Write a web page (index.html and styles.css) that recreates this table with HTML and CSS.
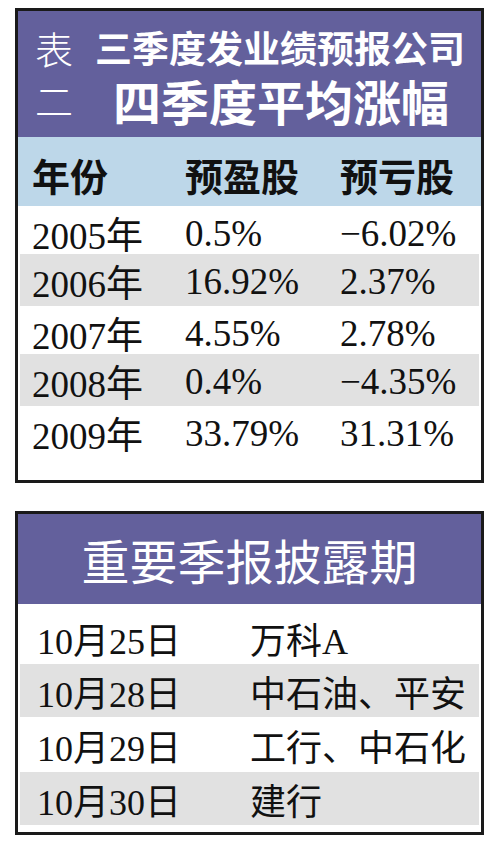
FILE: index.html
```html
<!DOCTYPE html>
<html lang="zh-CN">
<head>
  <meta charset="UTF-8" />
  <meta name="viewport" content="width=device-width, initial-scale=1" />
  <title>三季度发业绩预报公司四季度平均涨幅</title>
  <link rel="stylesheet" href="styles.css">
</head>
<body>
  <div class="panel stats">
    <div class="title">
      <div class="title-no">
        <span>表</span>
        <span>二</span>
      </div>
      <div class="title-main">
        <div class="t1">三季度发业绩预报公司</div>
        <div class="t2">四季度平均涨幅</div>
      </div>
    </div>
    <div class="rows">
      <div class="row head"><span>年份</span><span>预盈股</span><span>预亏股</span></div>
      <div class="row"><span>2005年</span><span>0.5%</span><span>−6.02%</span></div>
      <div class="row shade"><span>2006年</span><span>16.92%</span><span>2.37%</span></div>
      <div class="row"><span>2007年</span><span>4.55%</span><span>2.78%</span></div>
      <div class="row shade"><span>2008年</span><span>0.4%</span><span>−4.35%</span></div>
      <div class="row"><span>2009年</span><span>33.79%</span><span>31.31%</span></div>
    </div>
  </div>

  <div class="panel dates">
    <div class="title center">重要季报披露期</div>
    <div class="rows">
      <div class="row first"><span>10月25日</span><span>万科A</span></div>
      <div class="row shade"><span>10月28日</span><span>中石油、平安</span></div>
      <div class="row"><span>10月29日</span><span>工行、中石化</span></div>
      <div class="row shade"><span>10月30日</span><span>建行</span></div>
    </div>
  </div>
</body>
</html>
```

FILE: styles.css
```css
body {
  margin: 0;
  background-color: #fff;
  color: #111;
  font-family: "Liberation Serif", "Noto Sans CJK SC", serif;
  padding: 8px 16px 0 15px;
}
.panel {
  border: 3px solid #1a1a1a;
  background-color: #fff;
}
.title {
  background-color: #63609c;
  color: #fff;
  font-family: "Noto Sans CJK SC", sans-serif;
}
.stats .title {
  display: flex;
  height: 126px;
  padding: 0 0 0 17px;
}
.title-no {
  display: flex;
  flex-direction: column;
  font-size: 38px;
  font-weight: 300;
  padding-top: 11px;
  width: 60px;
}
.title-no span {
  line-height: 52px;
}
.title-main {
  padding-top: 11px;
}
.t1 {
  font-size: 37px;
  font-weight: 700;
  line-height: 50px;
}
.t2 {
  font-size: 48px;
  font-weight: 700;
  line-height: 56px;
  margin-left: 18px;
}
.rows {
  padding: 0 2px;
}
.row {
  display: grid;
  align-items: center;
  box-sizing: border-box;
}
.row.shade {
  background-color: #e1e1e1;
}
.stats .row {
  grid-template-columns: 153px 155px 1fr;
  padding: 0 0 6px 12px;
  height: 48px;
  font-size: 37px;
}
.stats .row.shade {
  height: 52px;
}
.stats .row.head {
  background-color: #bdd7e9;
  height: 69px;
  margin: 0 -2px;
  padding: 6px 0 0 14px;
  font-family: "Noto Sans CJK SC", sans-serif;
  font-weight: 700;
  font-size: 38px;
}
.stats .rows {
  padding-bottom: 26px;
}
.dates {
  margin-top: 28px;
}
.title.center {
  height: 90px;
  line-height: 90px;
  text-align: center;
  font-size: 48px;
}
.dates .rows {
  padding-top: 8px;
  padding-bottom: 7px;
}
.dates .row {
  grid-template-columns: 213px 1fr;
  padding-left: 17px;
  height: 53px;
  font-size: 36px;
}
.dates .row.first {
  height: 52px;
}
.dates .row:nth-child(3) {
  height: 55px;
}
```
